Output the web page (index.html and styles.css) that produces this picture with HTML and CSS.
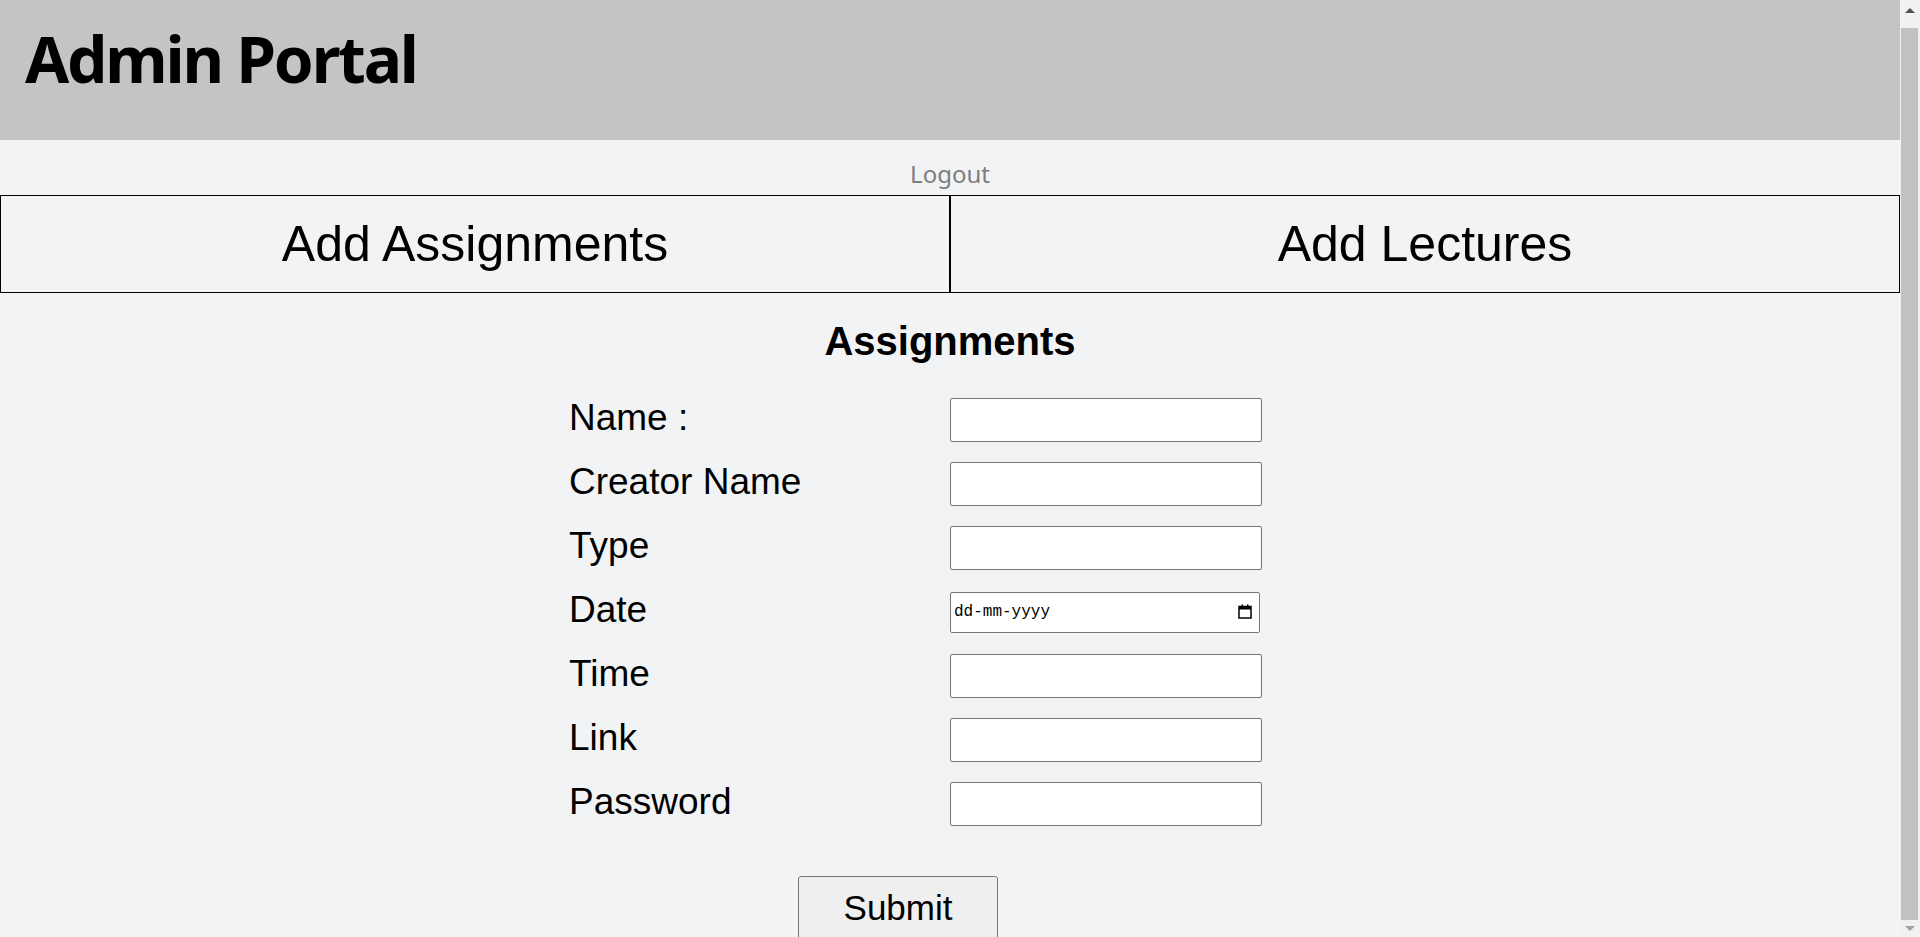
FILE: index.html
```html
<!DOCTYPE html>
<html lang="en">
<head>
<meta charset="utf-8">
<title>Admin Portal</title>
<link rel="stylesheet" href="styles.css">
</head>
<body>
<div class="page">
  <header class="topbar">
    <h1 class="brand">Admin Portal</h1>
  </header>
  <div class="logout-row"><a class="logout" href="#">Logout</a></div>
  <nav class="tabs">
    <div class="tab">Add Assignments</div>
    <div class="tab">Add Lectures</div>
  </nav>
  <main class="panel">
    <h2 class="panel-title">Assignments</h2>
    <form class="assignment-form">
      <div class="form-grid">
        <label class="field-label">Name :</label>
        <input class="field-input" type="text">
        <label class="field-label">Creator Name</label>
        <input class="field-input" type="text">
        <label class="field-label">Type</label>
        <input class="field-input" type="text">
        <label class="field-label">Date</label>
        <div class="date-field">
          <input class="field-input field-date" type="text" placeholder="dd-mm-yyyy">
          <svg class="cal-icon" width="14" height="15" viewBox="0 0 14 15">
            <rect x="1" y="2.5" width="12" height="11.5" fill="none" stroke="#000" stroke-width="1.5"/>
            <rect x="1" y="2.5" width="12" height="3" fill="#000"/>
            <rect x="3.5" y="0.5" width="1.5" height="2.5" fill="#000"/>
            <rect x="9" y="0.5" width="1.5" height="2.5" fill="#000"/>
          </svg>
        </div>
        <label class="field-label">Time</label>
        <input class="field-input" type="text">
        <label class="field-label">Link</label>
        <input class="field-input" type="text">
        <label class="field-label">Password</label>
        <input class="field-input" type="password">
      </div>
      <div class="form-actions">
        <button class="submit-btn" type="button">Submit</button>
      </div>
    </form>
  </main>
</div>
<div class="scrollbar" aria-hidden="true">
  <span class="sb-arrow sb-up"></span>
  <span class="sb-thumb"></span>
  <span class="sb-arrow sb-down"></span>
</div>
</body>
</html>
```

FILE: styles.css
```css
html, body {
  margin: 0;
  padding: 0;
}
body {
  background: #f2f3f5;
  font-family: "Liberation Sans", Arial, sans-serif;
  color: #000;
}
.page {
  width: 1900px;
  padding-bottom: 40px;
}
.topbar {
  background: #c4c4c4;
  height: 140px;
  box-sizing: border-box;
  padding: 15px 0 0 25px;
}
.brand {
  margin: 0;
  font-family: "Noto Sans", sans-serif;
  font-weight: 700;
  font-size: 64px;
  line-height: 87px;
  letter-spacing: -2.2px;
}
.logout-row {
  padding-top: 18px;
  margin-bottom: 5px;
  height: 32px;
  text-align: center;
  font-family: "Noto Sans", sans-serif;
  font-size: 24px;
  line-height: 32px;
}
.logout {
  color: #7d7d7d;
  text-decoration: none;
}
.tabs {
  display: flex;
}
.tab {
  flex: 1;
  height: 98px;
  box-sizing: border-box;
  border: 1px solid #000;
  display: flex;
  align-items: center;
  justify-content: center;
  font-size: 50px;
  line-height: 57px;
}
.panel-title {
  margin: 25px 0 0;
  text-align: center;
  font-size: 40px;
  font-weight: 700;
  line-height: 46px;
}
.assignment-form {
  margin: 24px 0 0;
}
.form-grid {
  display: grid;
  grid-template-columns: 381px 312px;
  grid-auto-rows: 64px;
  justify-content: center;
  padding-right: 69px;
}
.field-label {
  align-self: center;
  font-size: 37px;
  line-height: 37px;
  margin-bottom: 6px;
}
.field-input {
  align-self: center;
  box-sizing: border-box;
  width: 312px;
  height: 44px;
  margin: 0;
  border: 1px solid #767676;
  border-radius: 2px;
  background: #fff;
  padding: 0 4px;
  font-size: 16px;
}
.date-field {
  align-self: center;
  position: relative;
  width: 310px;
  height: 41px;
}
.field-date {
  width: 310px;
  height: 41px;
  font-family: "Liberation Mono", monospace;
  font-size: 16px;
  padding: 0 3px;
}
.field-date::placeholder {
  color: #000;
}
.cal-icon {
  position: absolute;
  right: 8px;
  top: 12px;
}
.form-actions {
  display: flex;
  padding: 40px 0 0 798px;
}
.submit-btn {
  width: 200px;
  height: 64px;
  flex: none;
  box-sizing: border-box;
  background: #efefef;
  border: 1px solid #767676;
  border-radius: 3px;
  font-family: "Liberation Sans", Arial, sans-serif;
  font-size: 35px;
  line-height: 40px;
  padding: 11px 0;
  color: #000;
}
.scrollbar {
  position: fixed;
  top: 0;
  right: 0;
  width: 20px;
  height: 100%;
  background: #f1f1f1;
}
.sb-thumb {
  position: absolute;
  top: 28px;
  bottom: 17px;
  left: 1px;
  width: 17px;
  background: #c1c1c1;
}
.sb-arrow {
  position: absolute;
  left: 5px;
  width: 0;
  height: 0;
  border-left: 5px solid transparent;
  border-right: 5px solid transparent;
}
.sb-up {
  top: 8px;
  border-bottom: 5px solid #505050;
}
.sb-down {
  bottom: 6px;
  border-top: 5px solid #a3a3a3;
}
```
